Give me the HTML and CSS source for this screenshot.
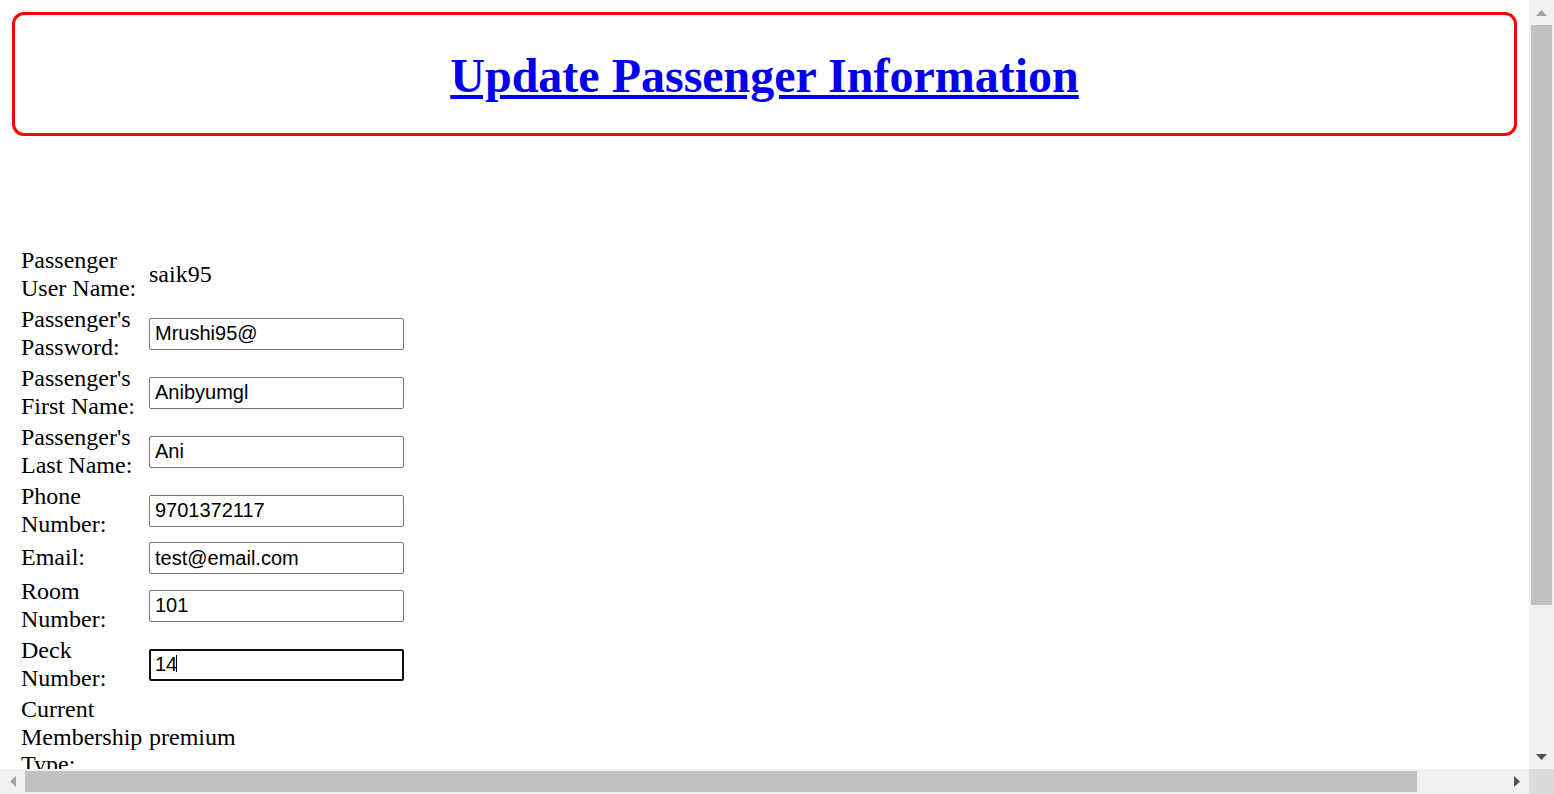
FILE: index.html
```html
<!DOCTYPE html>
<html lang="en">
<head>
<meta charset="utf-8">
<title>Update Passenger Information</title>
<link rel="stylesheet" href="styles.css">
</head>
<body>
<div class="screen">
  <div class="viewport">
    <div class="page">
      <div class="title-box">
        <h1 class="title"><a href="#" class="title-link">Update Passenger Information</a></h1>
      </div>

      <form class="passenger-form" action="#" method="post">
        <table class="form-table">
          <tr>
            <td class="label">Passenger User Name:</td>
            <td class="value">saik95</td>
          </tr>
          <tr>
            <td class="label">Passenger's Password:</td>
            <td class="value"><input class="field" type="text" name="password" value="Mrushi95@"></td>
          </tr>
          <tr>
            <td class="label">Passenger's First Name:</td>
            <td class="value"><input class="field" type="text" name="firstName" value="Anibyumgl"></td>
          </tr>
          <tr>
            <td class="label">Passenger's Last Name:</td>
            <td class="value"><input class="field" type="text" name="lastName" value="Ani"></td>
          </tr>
          <tr>
            <td class="label">Phone Number:</td>
            <td class="value"><input class="field" type="text" name="phone" value="9701372117"></td>
          </tr>
          <tr>
            <td class="label">Email:</td>
            <td class="value"><input class="field" type="text" name="email" value="test@email.com"></td>
          </tr>
          <tr>
            <td class="label">Room Number:</td>
            <td class="value"><input class="field" type="text" name="room" value="101"></td>
          </tr>
          <tr>
            <td class="label">Deck Number:</td>
            <td class="value value-focused"><input class="field field-focused" type="text" name="deck" value="14"><span class="caret"></span></td>
          </tr>
          <tr>
            <td class="label">Current Membership Type:</td>
            <td class="value">premium</td>
          </tr>
          <tr>
            <td class="label">New Membership Type:</td>
            <td class="value">
              <select class="select" name="membership">
                <option>premium</option>
                <option>standard</option>
                <option>basic</option>
              </select>
            </td>
          </tr>
          <tr>
            <td class="label"></td>
            <td class="value"><input class="submit" type="submit" value="Update"></td>
          </tr>
        </table>
      </form>
    </div>
  </div>

  <div class="vscroll">
    <div class="sb-btn">
      <svg class="arrow" width="11" height="6" viewBox="0 0 11 6"><path d="M0 6 L5.5 0 L11 6 Z" fill="#a3a3a3"/></svg>
    </div>
    <div class="vtrack"><div class="vthumb"></div></div>
    <div class="sb-btn">
      <svg class="arrow" width="11" height="6" viewBox="0 0 11 6"><path d="M0 0 L11 0 L5.5 6 Z" fill="#505050"/></svg>
    </div>
  </div>

  <div class="hscroll">
    <div class="sb-btn">
      <svg class="arrow" width="6" height="11" viewBox="0 0 6 11"><path d="M6 0 L6 11 L0 5.5 Z" fill="#a3a3a3"/></svg>
    </div>
    <div class="htrack"><div class="hthumb"></div></div>
    <div class="sb-btn">
      <svg class="arrow" width="6" height="11" viewBox="0 0 6 11"><path d="M0 0 L6 5.5 L0 11 Z" fill="#505050"/></svg>
    </div>
  </div>

  <div class="corner"></div>
</div>
</body>
</html>
```

FILE: styles.css
```css
html,
body {
  margin: 0;
  padding: 0;
  height: 100%;
  overflow: hidden;
  background: #ffffff;
}

body {
  font-family: "Liberation Serif", "Times New Roman", serif;
  color: #000000;
}

.screen {
  display: grid;
  grid-template-columns: 1fr 25px;
  grid-template-rows: 1fr 25px;
  width: 100vw;
  height: 100vh;
}

.viewport {
  overflow: hidden;
  min-width: 0;
  min-height: 0;
}

.page {
  padding: 8px;
}

.title-box {
  margin: 4px;
  border: 3px solid #ff0000;
  border-radius: 12px;
  text-align: center;
}

.title {
  margin: 33px 0 30px;
  font-size: 48px;
  font-weight: bold;
  line-height: normal;
}

.title-link {
  color: #0000ee;
  text-decoration: underline;
}

.passenger-form {
  margin: 108px 0 0 10px;
}

.form-table {
  table-layout: fixed;
  width: 389px;
  border-collapse: separate;
  border-spacing: 2px;
  font-size: 24px;
  line-height: 27.5px;
}

.form-table td {
  padding: 1px;
  vertical-align: middle;
}

.label {
  width: 124px;
}

.value {
  width: 257px;
  white-space: nowrap;
}

.value-focused {
  position: relative;
}

.field {
  box-sizing: border-box;
  display: block;
  width: 255px;
  height: 32px;
  margin: 0;
  padding: 4px 5px;
  font-family: "Liberation Sans", Arial, sans-serif;
  font-size: 20px;
  line-height: normal;
  color: #000000;
  background: #ffffff;
  border: 1px solid #767676;
  border-radius: 2px;
}

.field-focused,
.field:focus {
  border: 2px solid #101010;
  padding: 3px 4px;
  outline: none;
}

.caret {
  position: absolute;
  left: 28px;
  top: 50%;
  margin-top: -10px;
  width: 1px;
  height: 17px;
  background: #000000;
}

.select {
  font-family: "Liberation Sans", Arial, sans-serif;
  font-size: 20px;
  height: 32px;
}

.submit {
  font-family: "Liberation Sans", Arial, sans-serif;
  font-size: 20px;
  padding: 4px 16px;
  margin-top: 20px;
}

/* window scrollbars */
.vscroll {
  display: flex;
  flex-direction: column;
  background: #f1f1f1;
}

.hscroll {
  display: flex;
  flex-direction: row;
  background: #f1f1f1;
}

.sb-btn {
  flex: 0 0 25px;
  width: 25px;
  height: 25px;
  display: flex;
  align-items: center;
  justify-content: center;
}

.arrow {
  display: block;
}

.vtrack {
  flex: 1 1 auto;
  padding: 0 2px;
}

.vthumb {
  height: 580px;
  background: #c1c1c1;
}

.htrack {
  flex: 1 1 auto;
  padding: 2px 0;
}

.hthumb {
  width: 1392px;
  height: 21px;
  background: #c1c1c1;
}

.corner {
  background: #dcdcdc;
}
```
